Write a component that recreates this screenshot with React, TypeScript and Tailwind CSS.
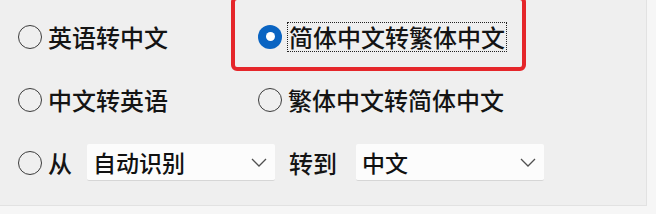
import React from "react";

const font = { fontFamily: '"Noto Sans CJK SC", "Noto Sans", sans-serif' };

function Radio({ checked }: { checked?: boolean }) {
  if (checked) {
    return (
      <span className="w-[24px] h-[24px] rounded-full bg-[#0a64c2] flex items-center justify-center shrink-0">
        <span className="w-[9px] h-[9px] rounded-full bg-white" />
      </span>
    );
  }
  return <span className="w-[24px] h-[24px] rounded-full border-[1.6px] border-[#3c3c3c] shrink-0" />;
}

function Chevron() {
  return (
    <svg width="16" height="9" viewBox="0 0 16 9" className="shrink-0">
      <path d="M1 1 L8 8 L15 1" fill="none" stroke="#505050" strokeWidth="1.3" />
    </svg>
  );
}

function Select({ value }: { value: string }) {
  return (
    <div className="w-[188px] h-[37px] bg-[#fcfcfc] border-b border-[#d6d6d6] rounded-[2px] flex items-center justify-between pl-[6px] pr-[8px] text-[23px] text-[#111]">
      <span>{value}</span>
      <Chevron />
    </div>
  );
}

export default function App() {
  return (
    <div className="w-[656px] h-[214px] bg-[#f6f6f6] overflow-hidden" style={font}>
      <div className="relative w-[647px] h-[206px] bg-[#efefef] border-r border-b border-[#e2e2e2] text-[24px] text-[#141414] leading-none font-medium">
        <div className="flex flex-col pt-[5px] pl-[18px]">
          <div className="h-[63px] flex items-center">
            <div className="w-[240px] flex items-center gap-[6px]">
              <Radio />
              <span>英语转中文</span>
            </div>
            <div className="flex items-center gap-[5px]">
              <Radio checked />
              <span className="border border-dotted border-[#222] px-[1px] py-[2px]">简体中文转繁体中文</span>
            </div>
          </div>
          <div className="h-[63px] flex items-center">
            <div className="w-[240px] flex items-center gap-[6px]">
              <Radio />
              <span>中文转英语</span>
            </div>
            <div className="flex items-center gap-[6px]">
              <Radio />
              <span>繁体中文转简体中文</span>
            </div>
          </div>
          <div className="h-[63px] flex items-center">
            <div className="flex items-center gap-[6px]">
              <Radio />
              <span>从</span>
            </div>
            <div className="ml-[15px]">
              <Select value="自动识别" />
            </div>
            <span className="ml-[14px]">转到</span>
            <div className="ml-[19px]">
              <Select value="中文" />
            </div>
          </div>
        </div>
        <div className="absolute left-[231px] top-[-4px] w-[295px] h-[75px] border-[4px] border-[#e5262a] rounded-[6px]" />
      </div>
    </div>
  );
}
